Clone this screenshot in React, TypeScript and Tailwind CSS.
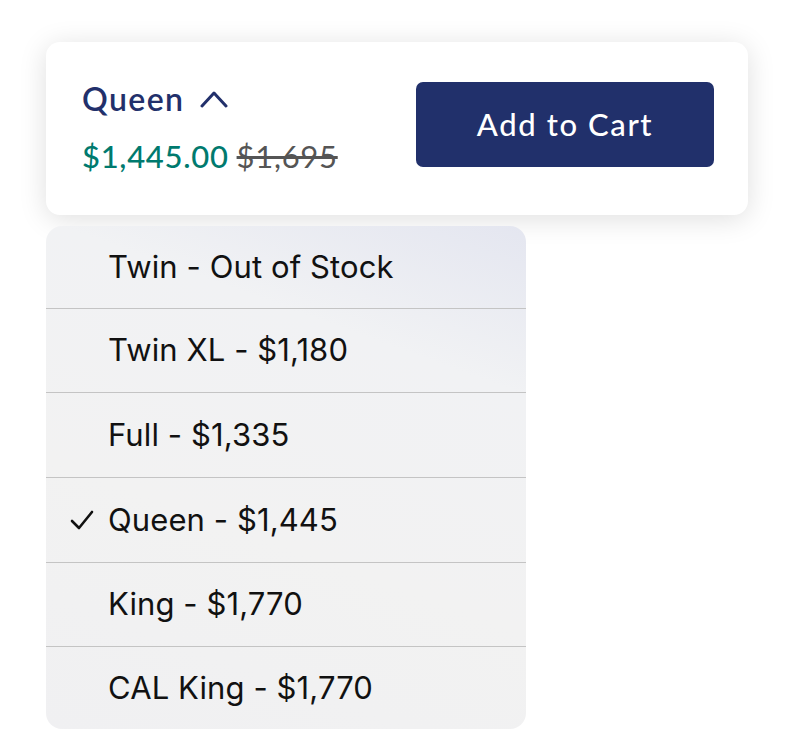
import React from "react";

const options = [
  { label: "Twin - Out of Stock", checked: false, h: "h-[82px]" },
  { label: "Twin XL - $1,180", checked: false, h: "h-[84px]" },
  { label: "Full - $1,335", checked: false, h: "h-[85px]" },
  { label: "Queen - $1,445", checked: true, h: "h-[85px]" },
  { label: "King - $1,770", checked: false, h: "h-[84px]" },
  { label: "CAL King - $1,770", checked: false, h: "h-[83px]" },
];

export default function App() {
  return (
    <div className="w-[794px] h-[730px] bg-white overflow-hidden relative">
      <div className="pl-[46px] pt-[42px]">
        <div className="w-[702px] h-[173px] bg-white rounded-[14px] shadow-[0_4px_28px_rgba(0,0,0,0.13)] flex items-start justify-between pl-[36px] pr-[34px]">
          <div className="flex flex-col pt-[41px]" style={{ fontFamily: "Lato, sans-serif" }}>
            <div className="flex items-center gap-[16px] text-[#22306b] text-[32px] font-semibold leading-none tracking-[1.4px]">
              <span>Queen</span>
              <svg width="28" height="18" viewBox="0 0 28 18" fill="none">
                <path d="M2 16 L14 3 L26 16" stroke="#22306b" strokeWidth="3" strokeLinecap="round" strokeLinejoin="round" />
              </svg>
            </div>
            <div className="flex items-baseline gap-[8px] mt-[26px] text-[31px] leading-none tracking-[0.7px]">
              <span className="text-[#007a6e] font-medium">$1,445.00</span>
              <span className="text-[#555] line-through">$1,695</span>
            </div>
          </div>
          <button
            className="mt-[40px] w-[298px] h-[85px] bg-[#21306b] rounded-[7px] text-white text-[31px] font-medium tracking-[1.6px]"
            style={{ fontFamily: "Lato, sans-serif" }}
          >
            Add to Cart
          </button>
        </div>
        <div
          className="mt-[11px] w-[480px] rounded-[16px] overflow-hidden bg-[linear-gradient(200deg,#e4e6f0_0%,#f1f2f4_25%,#f2f2f2_60%,#f0f0f2_100%)]"
          style={{ fontFamily: "Inter, sans-serif" }}
        >
          {options.map((o, i) => (
            <div
              key={o.label}
              className={`flex items-center ${o.h} ${i > 0 ? "border-t border-[#c4c4c4]" : ""}`}
            >
              <div className="w-[62px] flex justify-end pr-[14px]">
                {o.checked && (
                  <svg width="24" height="22" viewBox="0 0 24 22" fill="none">
                    <path d="M2 12 L9 19 L22 3" stroke="#111" strokeWidth="2.6" strokeLinecap="round" strokeLinejoin="round" />
                  </svg>
                )}
              </div>
              <span className="text-[31px] text-[#111] leading-none tracking-[0.1px] pb-[2px]">{o.label}</span>
            </div>
          ))}
        </div>
      </div>
    </div>
  );
}
